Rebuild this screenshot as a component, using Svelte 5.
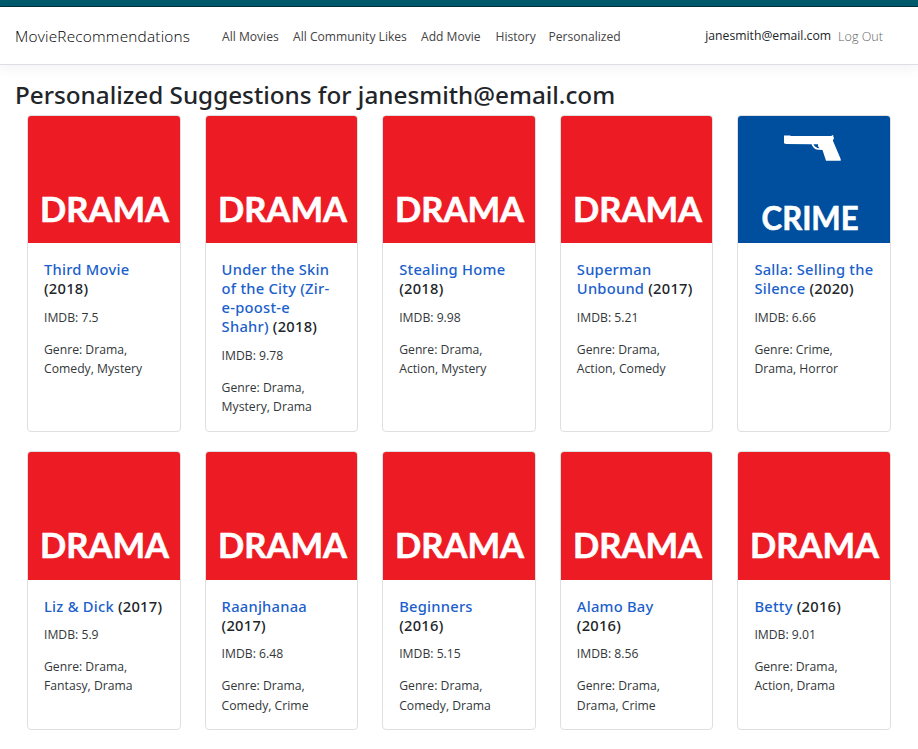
<script>
  const links = [
    { label: 'All Movies', w: 58 },
    { label: 'All Community Likes', w: 115 },
    { label: 'Add Movie', w: 61.5 },
    { label: 'History', w: 40 },
    { label: 'Personalized', w: 71 },
  ];
  // Newlines in a title mark its line breaks inside the narrow card.
  const movies = [
    { title: 'Third Movie\n', year: 2018, imdb: '7.5', genres: ['Drama', 'Comedy', 'Mystery'] },
    { title: 'Under the Skin\nof the City (Zir-\ne-poost-e\nShahr)', year: 2018, imdb: '9.78', genres: ['Drama', 'Mystery', 'Drama'] },
    { title: 'Stealing Home\n', year: 2018, imdb: '9.98', genres: ['Drama', 'Action', 'Mystery'] },
    { title: 'Superman\nUnbound', year: 2017, imdb: '5.21', genres: ['Drama', 'Action', 'Comedy'] },
    { title: 'Salla: Selling the\nSilence', year: 2020, imdb: '6.66', genres: ['Crime', 'Drama', 'Horror'] },
    { title: 'Liz & Dick', year: 2017, imdb: '5.9', genres: ['Drama', 'Fantasy', 'Drama'] },
    { title: 'Raanjhanaa\n', year: 2017, imdb: '6.48', genres: ['Drama', 'Comedy', 'Crime'] },
    { title: 'Beginners\n', year: 2016, imdb: '5.15', genres: ['Drama', 'Comedy', 'Drama'] },
    { title: 'Alamo Bay\n', year: 2016, imdb: '8.56', genres: ['Drama', 'Drama', 'Crime'] },
    { title: 'Betty', year: 2016, imdb: '9.01', genres: ['Drama', 'Action', 'Drama'] },
  ];
</script>

<div class="page">
  <div class="strip"></div>
  <header>
    <span class="brand">MovieRecommendations</span>
    <nav>
      {#each links as link}
        <a href="#top" style="width: {link.w}px">{link.label}</a>
      {/each}
    </nav>
    <span class="user">janesmith@email.com</span>
    <a class="logout" href="#top">Log Out</a>
  </header>
  <main>
    <h1>Personalized Suggestions for janesmith@email.com</h1>
    <div class="grid">
      {#each movies as m}
        <article>
          {#if m.genres[0] === 'Crime'}
            <svg class="poster crime" viewBox="0 0 151.6 127.6">
              <path d="M46 19.4H52L53 20H93.5L94 19.3H95.3V20.6L96 22.2L94.8 24.5L102.7 43V44.7H88L84.5 34Q83.5 33.6 80 33.7Q75 33 73.6 28.2L48 28L46 27.2Z" fill="#fff" />
              <path d="M75.5 28.3Q77 32 81.5 32.3L80 30.2V28.3Z" fill="#004f9e" />
              <text x="23.6" y="113.7" font-size="31.8" textLength="97" lengthAdjust="spacingAndGlyphs">CRIME</text>
            </svg>
          {:else}
            <svg class="poster drama" viewBox="0 0 151.6 127.6">
              <text x="12" y="105.7" font-size="34" textLength="129" lengthAdjust="spacingAndGlyphs">DRAMA</text>
            </svg>
          {/if}
          <div class="body">
            <h2><a href="#top">{m.title}</a>{m.title.endsWith('\n') ? '' : ' '}({m.year})</h2>
            <p>IMDB: {m.imdb}</p>
            <p>Genre: {m.genres[0]},{'\n'}{m.genres.slice(1).join(', ')}</p>
          </div>
        </article>
      {/each}
    </div>
  </main>
</div>

<style>
  :global(body) { margin: 0; background: #fff; }
  .page {
    height: 749px;
    overflow: hidden;
    font-family: 'Open Sans', 'Noto Sans', sans-serif;
    color: #212529;
  }
  a { text-decoration: none; }
  .strip { height: 6px; background: #005a6b; border-bottom: 1px solid #00303f; }
  header {
    box-sizing: border-box;
    height: 58px;
    display: flex;
    align-items: center;
    padding: 1px 35px 0 15px;
    border-bottom: 1px solid #dcdfe3;
    box-shadow: 0 4px 12px rgba(0, 0, 0, 0.05);
    white-space: nowrap;
  }
  .brand { width: 207px; font-size: 15.4px; font-weight: 350; letter-spacing: 0.2px; color: #000; }
  nav { display: flex; gap: 13px; flex: 1; padding-top: 1px; }
  nav a { font-size: 12.1px; font-weight: 400; color: #444; }
  .user { font-size: 12.2px; line-height: 17px; padding-bottom: 1px; color: #212529; }
  .logout { font-size: 12.6px; font-weight: 350; color: #666; margin-left: 7px; padding-top: 1px; }
  main { padding: 13.8px 15px 0; }
  h1 {
    margin: 0;
    height: 36px;
    line-height: 31px;
    font-family: 'Noto Sans', sans-serif;
    font-size: 24.25px;
    font-weight: 500;
    white-space: nowrap;
  }
  .grid { display: grid; grid-template-columns: repeat(5, 1fr); row-gap: 19.2px; }
  article {
    margin: 0 12px;
    border: 1px solid #dfdfdf;
    border-radius: 4px;
    overflow: hidden;
    background: #fff;
  }
  .poster { display: block; width: 100%; height: 127.6px; }
  .poster text {
    font-family: Lato, sans-serif;
    font-weight: 700;
    fill: #fff;
    stroke: #fff;
    stroke-width: 0.6px;
  }
  .drama { background: #ed1c24; }
  .crime { background: #004f9e; }
  .body { padding: 16.7px 0 14.6px 16px; white-space: pre-line; }
  h2 {
    margin: 0 0 9.6px;
    font-family: 'Noto Sans', sans-serif;
    font-size: 14.7px;
    line-height: 19.1px;
    font-weight: 500;
    letter-spacing: 0.25px;
  }
  h2 a { color: #1b5fcb; }
  p { margin: 0 0 12.8px; font-size: 12.2px; line-height: 19.2px; font-weight: 400; color: #33373a; }
  p:last-child { margin-bottom: 0; }
</style>
